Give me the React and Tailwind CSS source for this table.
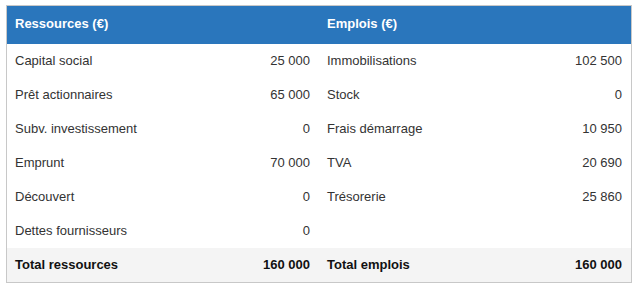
import React from 'react';

const ressources = [
  ['Capital social', '25 000'],
  ['Prêt actionnaires', '65 000'],
  ['Subv. investissement', '0'],
  ['Emprunt', '70 000'],
  ['Découvert', '0'],
  ['Dettes fournisseurs', '0'],
];

const emplois = [
  ['Immobilisations', '102 500'],
  ['Stock', '0'],
  ['Frais démarrage', '10 950'],
  ['TVA', '20 690'],
  ['Trésorerie', '25 860'],
  ['', ''],
];

const Cell = ({ label, value, bold }) => (
  <div className={`flex items-center justify-between pl-2 pr-[9px] ${bold ? 'font-bold text-[#111]' : ''}`}>
    <span>{label}</span>
    <span>{value}</span>
  </div>
);

export default function App() {
  return (
    <div className="w-[636px] h-[288px] bg-white pt-[5px] pl-[6px]" style={{ fontFamily: '"Liberation Sans", Arial, sans-serif' }}>
      <div className="w-[626px] border border-[#c8c8c8] text-[13px] text-[#333]">
        {/* header */}
        <div className="grid grid-cols-2 h-[38px] pb-[2px] bg-[#2a76bc] text-white font-bold">
          <div className="flex items-center px-2">Ressources (€)</div>
          <div className="flex items-center px-2">Emplois (€)</div>
        </div>

        {ressources.map((r, i) => (
          <div key={i} className="grid grid-cols-2 h-[34px]">
            <Cell label={r[0]} value={r[1]} />
            <Cell label={emplois[i][0]} value={emplois[i][1]} />
          </div>
        ))}

        {/* totals */}
        <div className="grid grid-cols-2 h-[34px] bg-[#f4f4f4]">
          <Cell label="Total ressources" value="160 000" bold />
          <Cell label="Total emplois" value="160 000" bold />
        </div>
      </div>
    </div>
  );
}
